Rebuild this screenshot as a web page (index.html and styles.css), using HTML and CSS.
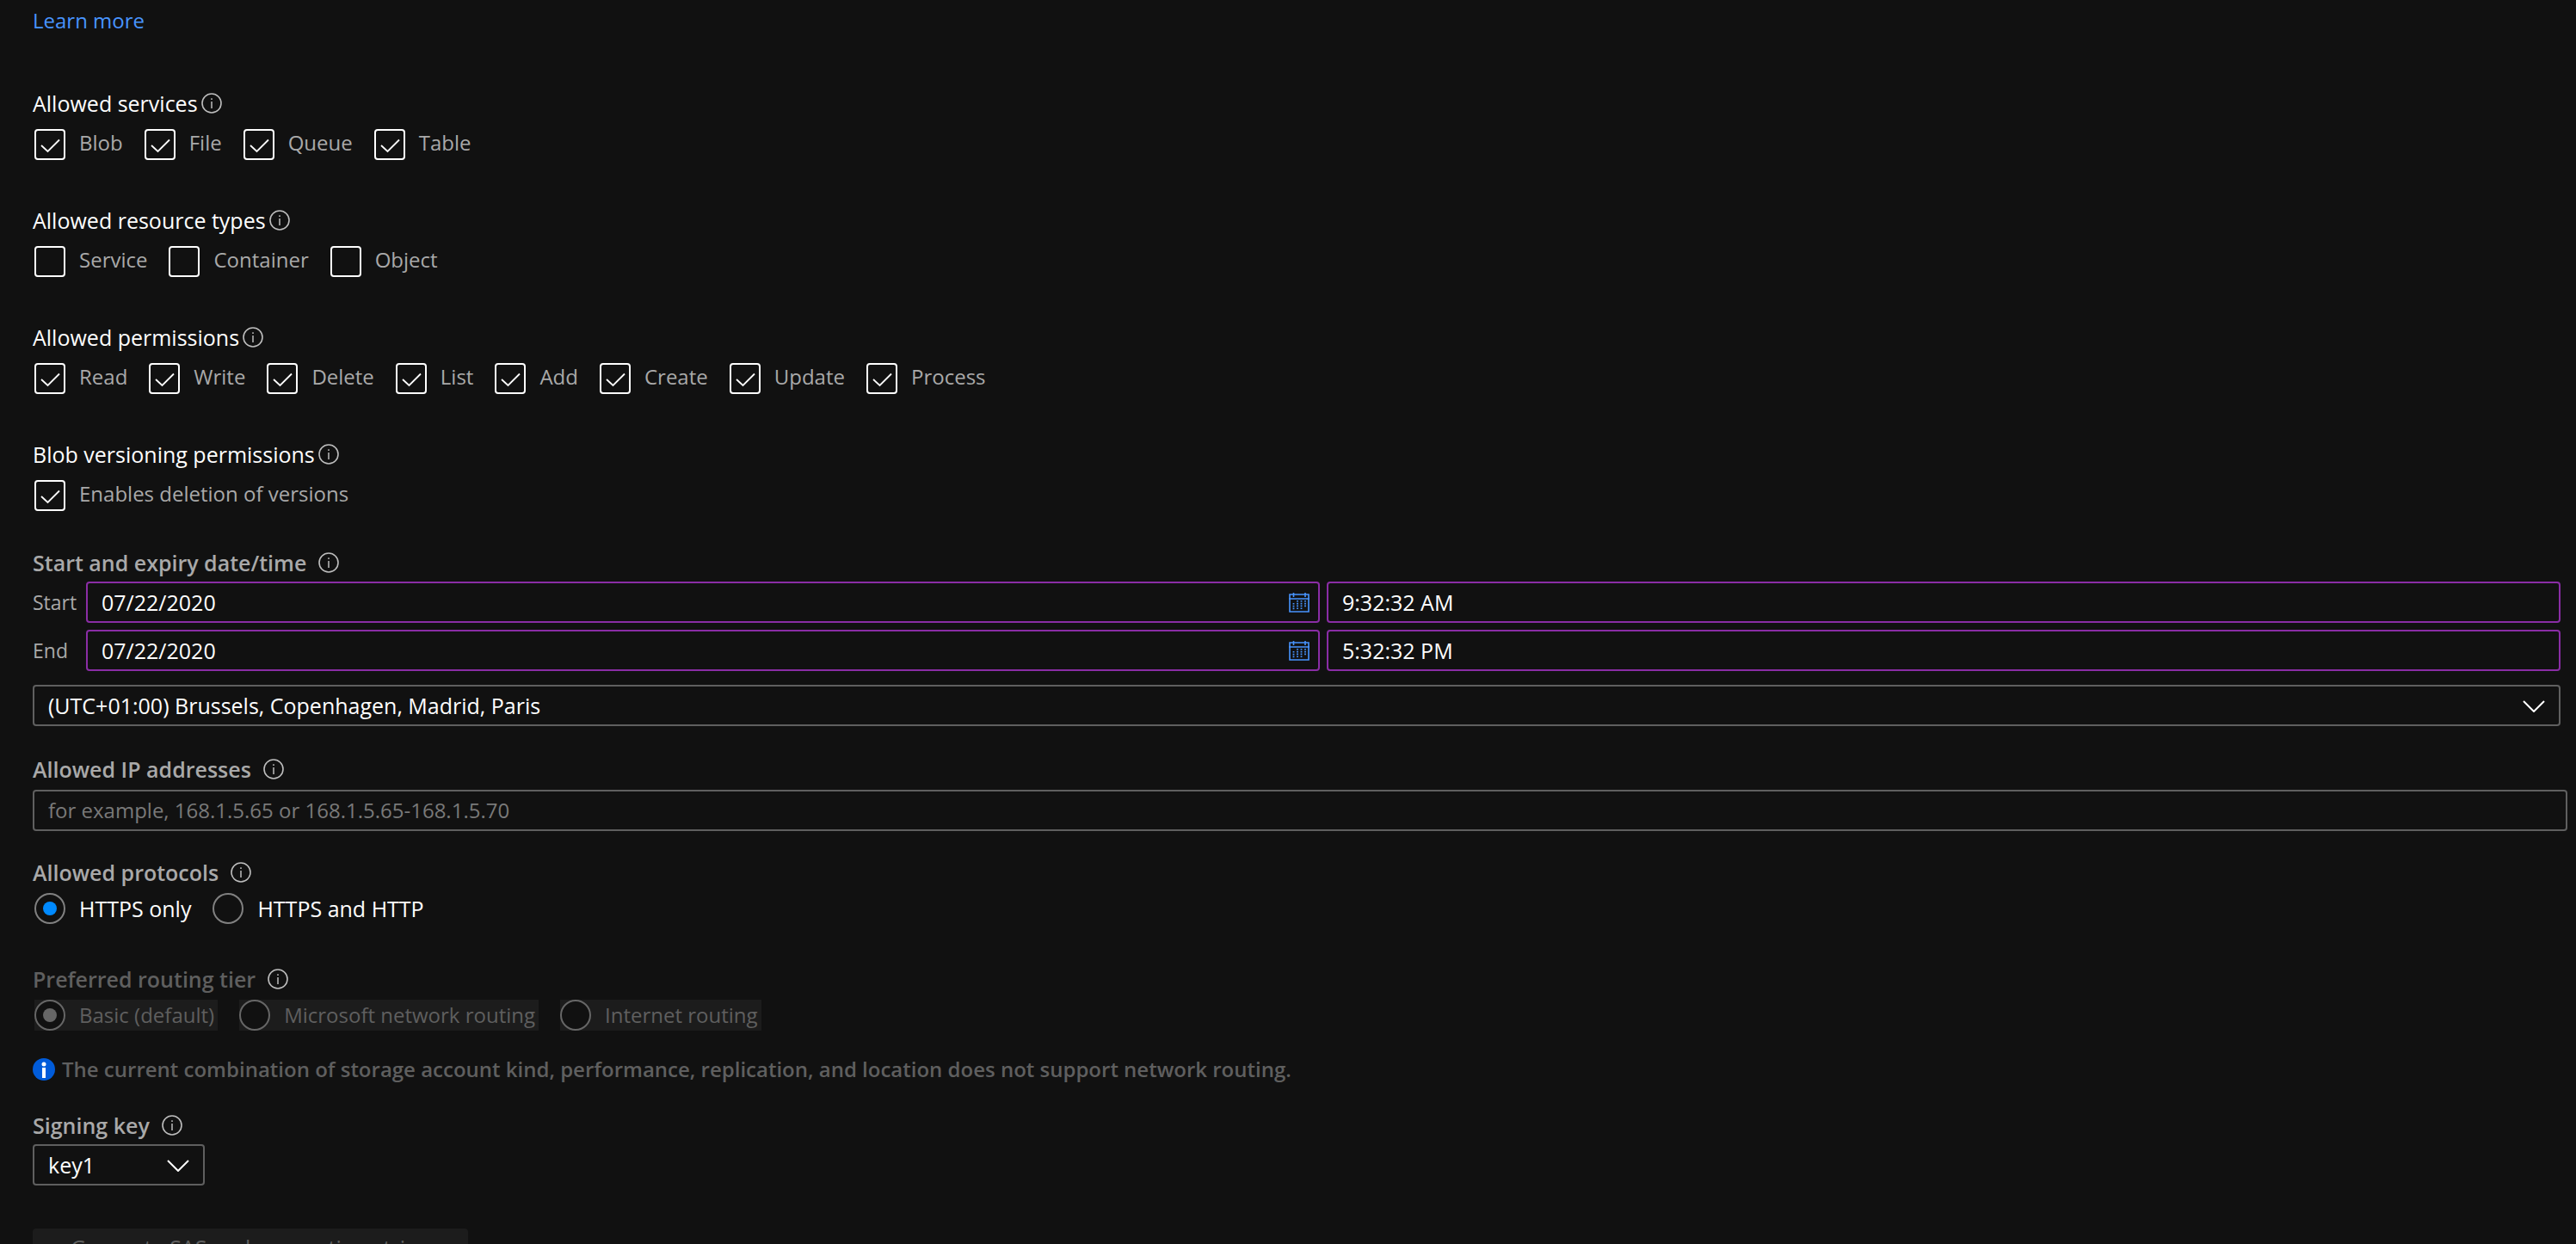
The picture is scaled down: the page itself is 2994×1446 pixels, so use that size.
FILE: index.html
```html
<!DOCTYPE html>
<html lang="en">
<head>
<meta charset="utf-8">
<title>Shared access signature</title>
<link rel="stylesheet" href="styles.css">
</head>
<body>
<svg class="sprite" aria-hidden="true">
  <symbol id="info" viewBox="0 0 24 24">
    <circle cx="12" cy="12" r="11" fill="none" stroke="currentColor" stroke-width="1.6"/>
    <path d="M12 10v8M12 6.2v1.8" fill="none" stroke="currentColor" stroke-width="1.5"/>
  </symbol>
  <symbol id="calendar" viewBox="0 0 24 24">
    <path d="M1 3h22v20H1zM0 8h24" fill="none" stroke="currentColor" stroke-width="1.6"/>
    <path d="M5.500 1v5M19 1v5" fill="none" stroke="currentColor" stroke-width="1.6"/>
    <path d="M5.500 13v8M10 10v11M14.500 10v11M19 10v8" fill="none" stroke="currentColor" stroke-width="1.8" stroke-dasharray="1.6 1.2"/>
  </symbol>
  <symbol id="chevron" viewBox="0 0 26 14">
    <path d="M1 1l12 12L25 1" fill="none" stroke="currentColor" stroke-width="2"/>
  </symbol>
</svg>
<main class="page">
  <a class="learn" href="#">Learn more</a>
  <form class="form">
    <fieldset class="group">
      <legend class="title">Allowed services <svg class="info"><use href="#info"/></svg></legend>
      <div class="options">
        <label class="option"><input class="check" type="checkbox" checked><span>Blob</span></label>
        <label class="option"><input class="check" type="checkbox" checked><span>File</span></label>
        <label class="option"><input class="check" type="checkbox" checked><span>Queue</span></label>
        <label class="option"><input class="check" type="checkbox" checked><span>Table</span></label>
      </div>
    </fieldset>
    <fieldset class="group">
      <legend class="title">Allowed resource types <svg class="info"><use href="#info"/></svg></legend>
      <div class="options">
        <label class="option"><input class="check" type="checkbox"><span>Service</span></label>
        <label class="option"><input class="check" type="checkbox"><span>Container</span></label>
        <label class="option"><input class="check" type="checkbox"><span>Object</span></label>
      </div>
    </fieldset>
    <fieldset class="group">
      <legend class="title">Allowed permissions <svg class="info"><use href="#info"/></svg></legend>
      <div class="options">
        <label class="option"><input class="check" type="checkbox" checked><span>Read</span></label>
        <label class="option"><input class="check" type="checkbox" checked><span>Write</span></label>
        <label class="option"><input class="check" type="checkbox" checked><span>Delete</span></label>
        <label class="option"><input class="check" type="checkbox" checked><span>List</span></label>
        <label class="option"><input class="check" type="checkbox" checked><span>Add</span></label>
        <label class="option"><input class="check" type="checkbox" checked><span>Create</span></label>
        <label class="option"><input class="check" type="checkbox" checked><span>Update</span></label>
        <label class="option"><input class="check" type="checkbox" checked><span>Process</span></label>
      </div>
    </fieldset>
    <fieldset class="group">
      <legend class="title">Blob versioning permissions <svg class="info"><use href="#info"/></svg></legend>
      <div class="options">
        <label class="option"><input class="check" type="checkbox" checked><span>Enables deletion of versions</span></label>
      </div>
    </fieldset>

    <fieldset class="dates">
      <legend class="title strong">Start and expiry date/time <svg class="info"><use href="#info"/></svg></legend>
      <div class="date-row">
        <label class="date-label" for="start">Start</label>
        <div class="date-box"><input class="field edited" id="start" type="text" value="07/22/2020"><svg class="calendar"><use href="#calendar"/></svg></div>
        <input class="field edited" type="text" value="9:32:32 AM" aria-label="Start time">
      </div>
      <div class="date-row">
        <label class="date-label" for="end">End</label>
        <div class="date-box"><input class="field edited" id="end" type="text" value="07/22/2020"><svg class="calendar"><use href="#calendar"/></svg></div>
        <input class="field edited" type="text" value="5:32:32 PM" aria-label="End time">
      </div>
      <div class="select-box zone">
        <select class="field" aria-label="Time zone"><option>(UTC+01:00) Brussels, Copenhagen, Madrid, Paris</option></select>
        <svg class="chevron"><use href="#chevron"/></svg>
      </div>
    </fieldset>

    <div class="addresses">
      <label class="title strong" for="ip">Allowed IP addresses <svg class="info"><use href="#info"/></svg></label>
      <input class="field" id="ip" type="text" placeholder="for example, 168.1.5.65 or 168.1.5.65-168.1.5.70">
    </div>

    <fieldset class="protocols">
      <legend class="title strong">Allowed protocols <svg class="info"><use href="#info"/></svg></legend>
      <div class="options">
        <label class="option bright"><input class="radio" type="radio" name="protocol" checked><span>HTTPS only</span></label>
        <label class="option bright"><input class="radio" type="radio" name="protocol"><span>HTTPS and HTTP</span></label>
      </div>
    </fieldset>

    <fieldset class="routing" disabled>
      <legend class="title strong"><span class="muted">Preferred routing tier</span> <svg class="info"><use href="#info"/></svg></legend>
      <div class="options">
        <label class="option off"><input class="radio" type="radio" name="routing" checked><span>Basic (default)</span></label>
        <label class="option off"><input class="radio" type="radio" name="routing"><span>Microsoft network routing</span></label>
        <label class="option off"><input class="radio" type="radio" name="routing"><span>Internet routing</span></label>
      </div>
    </fieldset>

    <p class="notice">
      <svg class="notice-icon" viewBox="0 0 26 26"><circle cx="13" cy="13" r="13" fill="#015cda"/><circle cx="13" cy="7" r="2.500" fill="#fff"/><path d="M11 11h4v12h-4z" fill="#fff"/></svg>
      The current combination of storage account kind, performance, replication, and location does not support network routing.
    </p>

    <div class="signing">
      <label class="title strong" for="key">Signing key <svg class="info"><use href="#info"/></svg></label>
      <div class="select-box key">
        <select class="field" id="key"><option>key1</option></select>
        <svg class="chevron"><use href="#chevron"/></svg>
      </div>
    </div>

    <button class="generate" type="button" disabled>Generate SAS and connection string</button>
  </form>
</main>
</body>
</html>
```
FILE: styles.css
```css
* { box-sizing: border-box; }

body {
  margin: 0;
  background: #111;
  color: #fff;
  font: 25px/36px "Segoe UI", "Open Sans", "Noto Sans", sans-serif;
}

.sprite { display: none; }

.page {
  height: 100vh;
  overflow: hidden;
  padding: 6px 10px 0 38px;
}

.learn {
  display: block;
  width: max-content;
  color: #4894fe;
  font-size: 24px;
  text-decoration: none;
}

.form { display: flex; flex-direction: column; padding-top: 60px; }

fieldset { margin: 0; padding: 0; border: 0; min-width: 0; }

.title {
  display: flex;
  align-items: center;
  gap: 4px;
  padding: 0;
  height: 36px;
}

.title.strong { gap: 14px; font-weight: 600; color: #a9a9a9; }
.muted { color: #5f5f5f; }

.info { width: 24px; height: 24px; color: #bdbdbd; flex: none; }

.group { margin-bottom: 52px; }
.group .options { margin-top: 12px; }
.group .option span { padding-bottom: 4px; }

.options { display: flex; gap: 25px; padding-left: 2px; }

.option {
  display: flex;
  align-items: center;
  gap: 16px;
  height: 36px;
  color: #a9a9a9;
  font-size: 24px;
}

.option.bright { color: #fff; font-size: 25px; }
.option.off { background: #1c1c1c; color: #5f5f5f; padding-right: 4px; }

.check, .radio {
  appearance: none;
  flex: none;
  width: 36px;
  height: 36px;
  margin: 0;
  background: #111;
}

.check { border: 2px solid #fff; border-radius: 4px; }

.check:checked {
  background: url("data:image/svg+xml,%3Csvg xmlns='http://www.w3.org/2000/svg' viewBox='0 0 32 32'%3E%3Cpath d='M6 17l7.5 7L27 10.500' fill='none' stroke='white' stroke-width='1.8'/%3E%3C/svg%3E") center / 32px 32px no-repeat;
}

.radio {
  display: grid;
  place-items: center;
  border: 2px solid #808080;
  border-radius: 50%;
}

.radio:checked::before {
  content: "";
  width: 16px;
  height: 16px;
  border-radius: 50%;
  background: #008aff;
}

.radio:disabled { border-color: #666; }
.radio:disabled::before { background: #666; }

.field {
  display: block;
  appearance: none;
  width: 100%;
  height: 48px;
  margin: 0;
  padding: 0 16px;
  border: 2px solid #5f5f5f;
  border-radius: 4px;
  background: #111;
  color: #fff;
  font: inherit;
}

.field::placeholder { color: #797979; opacity: 1; }
.field.edited { border-color: #8a2da5; }

.dates { margin: -10px 8px 32px 0; }

.date-row {
  display: grid;
  grid-template-columns: 54px 1fr 1fr;
  gap: 8px;
  align-items: center;
  margin-top: 8px;
}

.dates .title + .date-row { margin-top: 4px; }
.date-label { color: #a9a9a9; font-size: 23px; }

.date-box, .select-box { position: relative; }

.calendar {
  position: absolute;
  top: 12px;
  right: 12px;
  width: 24px;
  height: 24px;
  color: #4894fe;
}

.chevron {
  position: absolute;
  top: 18px;
  right: 18px;
  width: 26px;
  height: 14px;
  pointer-events: none;
}

.zone { margin-top: 16px; }

.addresses { margin-bottom: 30px; }
.addresses .field { padding-bottom: 2px; font-size: 24px; }
.addresses .title, .protocols .title, .routing .title { margin-bottom: 6px; }

.protocols { margin-bottom: 46px; }

.routing { margin-bottom: 27px; }

.notice {
  display: flex;
  align-items: center;
  gap: 8px;
  margin: 0 0 29px;
  color: #5f5f5f;
  font-size: 24px;
  font-weight: 600;
}

.notice-icon { width: 26px; height: 26px; flex: none; }

.signing .title { margin-bottom: 4px; }
.key { width: 200px; }

.generate {
  align-self: flex-start;
  height: 44px;
  margin-top: 50px;
  padding: 0 44px;
  border: 0;
  border-radius: 4px;
  background: #1c1c1c;
  color: #5f5f5f;
  font: inherit;
}
```
